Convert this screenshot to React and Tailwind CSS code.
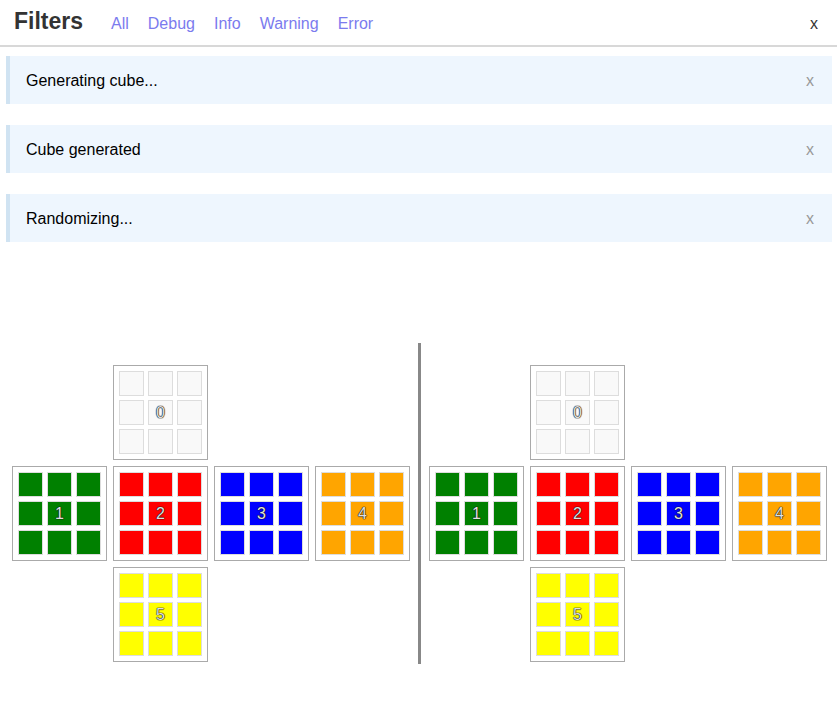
const FILTERS = ["All", "Debug", "Info", "Warning", "Error"];
const LOGS = ["Generating cube...", "Cube generated", "Randomizing..."];

const FACES = [
  { id: 0, color: "bg-[#f9f9f9]", pos: "col-start-2 row-start-1" },
  { id: 1, color: "bg-[#008000]", pos: "col-start-1 row-start-2" },
  { id: 2, color: "bg-[#ff0000]", pos: "col-start-2 row-start-2" },
  { id: 3, color: "bg-[#0000ff]", pos: "col-start-3 row-start-2" },
  { id: 4, color: "bg-[#ffa500]", pos: "col-start-4 row-start-2" },
  { id: 5, color: "bg-[#ffff00]", pos: "col-start-2 row-start-3" },
];

function Face({ face }) {
  return (
    <div className={`${face.pos} w-[95px] h-[95px] border border-[#aaaaaa] bg-white p-[5px] grid grid-cols-[repeat(3,25px)] grid-rows-[repeat(3,25px)] gap-[4px]`}>
      {Array.from({ length: 9 }).map((_, i) => (
        <div
          key={i}
          className={`${face.color} border border-[#dddddd] flex items-center justify-center text-[16px] leading-none text-[#e0e0e0] [text-shadow:0_0_1px_#111,0_0_1px_#111,0_0_1px_#111]`}
        >
          {i === 4 ? face.id : ""}
        </div>
      ))}
    </div>
  );
}

function Cube() {
  return (
    <div className="grid grid-cols-[repeat(4,95px)] grid-rows-[repeat(3,95px)] gap-[6px]">
      {FACES.map((f) => (
        <Face key={f.id} face={f} />
      ))}
    </div>
  );
}

export default function App() {
  return (
    <div className="min-h-[725px] bg-white font-['Liberation_Sans',Arial,sans-serif]">
      <div className="h-[47px] flex items-center px-[14px] border-b-2 border-[#d8d8d8]">
        <h1 className="text-[23px] font-bold text-[#333333] mr-[28px] -mt-[3px]">Filters</h1>
        <div className="flex gap-[19px] text-[16px] text-[#7b7bee] mt-[2px]">
          {FILTERS.map((f) => (
            <span key={f}>{f}</span>
          ))}
        </div>
        <span className="ml-auto mr-[5px] mt-[2px] text-[16px] text-[#333333]">x</span>
      </div>

      <div className="mt-[9px] ml-[6px] mr-[5px] flex flex-col gap-[21px]">
        {LOGS.map((l) => (
          <div key={l} className="h-[48px] flex items-center bg-[#eef6fe] border-l-4 border-[#d0e3f2] pl-[16px] pr-[18px] text-[16px] text-black">
            <span className="mt-[2px]">{l}</span>
            <span className="ml-auto mt-[2px] text-[#999999]">x</span>
          </div>
        ))}
      </div>

      <div className="mt-[101px] flex">
        <div className="w-[418px] pl-[12px] pt-[22px]">
          <Cube />
        </div>
        <div className="w-[3px] h-[321px] bg-[#888888]" />
        <div className="flex-1 pl-[8px] pt-[22px]">
          <Cube />
        </div>
      </div>
    </div>
  );
}
